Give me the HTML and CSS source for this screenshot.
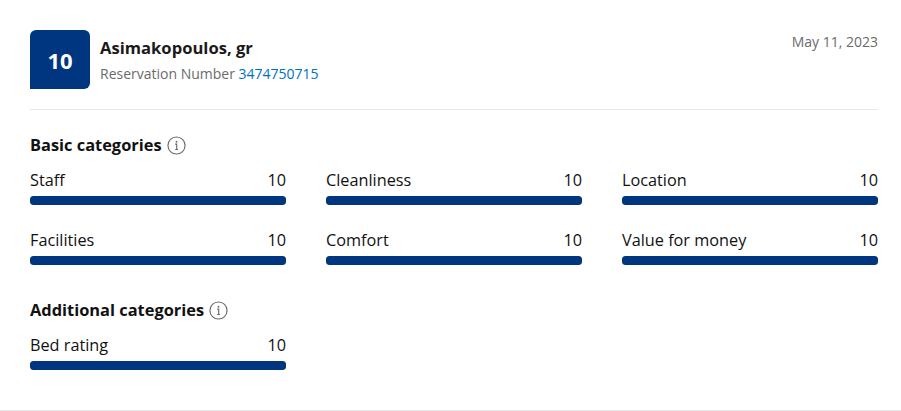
FILE: index.html
```html
<!DOCTYPE html>
<html>
<head>
<meta charset="utf-8">
<link rel="stylesheet" href="styles.css">
</head>
<body>
<div class="card">
  <div class="header">
    <div class="badge">10</div>
    <div class="guest">
      <div class="name">Asimakopoulos, gr</div>
      <div class="resv">Reservation Number <a class="link">3474750715</a></div>
    </div>
    <div class="date">May 11, 2023</div>
  </div>
  <div class="divider"></div>

  <div class="section">
    <div class="heading">Basic categories <span class="info"><svg width="19" height="19" viewBox="0 0 20 20"><circle cx="10" cy="10" r="9" fill="none" stroke="#6b6b6b" stroke-width="1.2"/><circle cx="10" cy="6" r="1" fill="#6b6b6b"/><path d="M8.6 8.6h1.6v5.6M8.6 14.2h3" fill="none" stroke="#6b6b6b" stroke-width="1.2"/></svg></span></div>
    <div class="grid">
      <div class="item"><div class="row"><span>Staff</span><span>10</span></div><div class="bar"><div class="fill" style="width:100%"></div></div></div>
      <div class="item"><div class="row"><span>Cleanliness</span><span>10</span></div><div class="bar"><div class="fill" style="width:100%"></div></div></div>
      <div class="item"><div class="row"><span>Location</span><span>10</span></div><div class="bar"><div class="fill" style="width:100%"></div></div></div>
      <div class="item"><div class="row"><span>Facilities</span><span>10</span></div><div class="bar"><div class="fill" style="width:100%"></div></div></div>
      <div class="item"><div class="row"><span>Comfort</span><span>10</span></div><div class="bar"><div class="fill" style="width:100%"></div></div></div>
      <div class="item"><div class="row"><span>Value for money</span><span>10</span></div><div class="bar"><div class="fill" style="width:100%"></div></div></div>
    </div>
  </div>

  <div class="section second">
    <div class="heading">Additional categories <span class="info"><svg width="19" height="19" viewBox="0 0 20 20"><circle cx="10" cy="10" r="9" fill="none" stroke="#6b6b6b" stroke-width="1.2"/><circle cx="10" cy="6" r="1" fill="#6b6b6b"/><path d="M8.6 8.6h1.6v5.6M8.6 14.2h3" fill="none" stroke="#6b6b6b" stroke-width="1.2"/></svg></span></div>
    <div class="grid">
      <div class="item"><div class="row"><span>Bed rating</span><span>10</span></div><div class="bar"><div class="fill" style="width:100%"></div></div></div>
    </div>
  </div>
</div>
</body>
</html>
```

FILE: styles.css
```css
* { box-sizing: border-box; }
html, body { margin: 0; padding: 0; background: #fff; }
body {
  font-family: "Open Sans", "Noto Sans", sans-serif;
  color: #111;
  font-size: 16px;
}
.card {
  padding: 30px 23px 40px 30px;
  border-bottom: 1px solid #e7e7e7;
}
.header {
  display: flex;
  align-items: flex-start;
}
.badge {
  width: 60px;
  height: 59px;
  background: #003580;
  color: #fff;
  font-weight: 700;
  font-size: 22px;
  display: flex;
  align-items: center;
  justify-content: center;
  border-radius: 6px 6px 6px 0;
  flex: none;
}
.guest {
  margin-left: 10px;
  flex: 1;
  padding-top: 6px;
}
.name {
  font-weight: 700;
  font-size: 16.6px;
  line-height: 24px;
  color: #1a1a1a;
}
.resv {
  font-size: 14px;
  line-height: 20px;
  color: #6b6b6b;
  margin-top: 4px;
}
.link { color: #0071c2; text-decoration: none; }
.date {
  font-size: 14px;
  line-height: 20px;
  color: #6b6b6b;
  padding-top: 2px;
}
.divider {
  height: 1px;
  background: #e7e7e7;
  margin-top: 20px;
}
.section { margin-top: 23px; }
.section.second { margin-top: 33px; }
.heading {
  font-weight: 700;
  font-size: 16.4px;
  line-height: 24px;
  display: flex;
  align-items: center;
  gap: 5px;
}
.info { display: inline-flex; }
.grid {
  display: grid;
  grid-template-columns: repeat(3, 1fr);
  column-gap: 40px;
  row-gap: 23px;
  margin-top: 11px;
}
.row {
  display: flex;
  justify-content: space-between;
  line-height: 24px;
  font-size: 16.25px;
}
.bar {
  height: 9px;
  margin-top: 4px;
  background: #e7e7e7;
  border-radius: 3px;
  overflow: hidden;
}
.fill {
  height: 100%;
  background: #003580;
  border-radius: 3px;
}
```
